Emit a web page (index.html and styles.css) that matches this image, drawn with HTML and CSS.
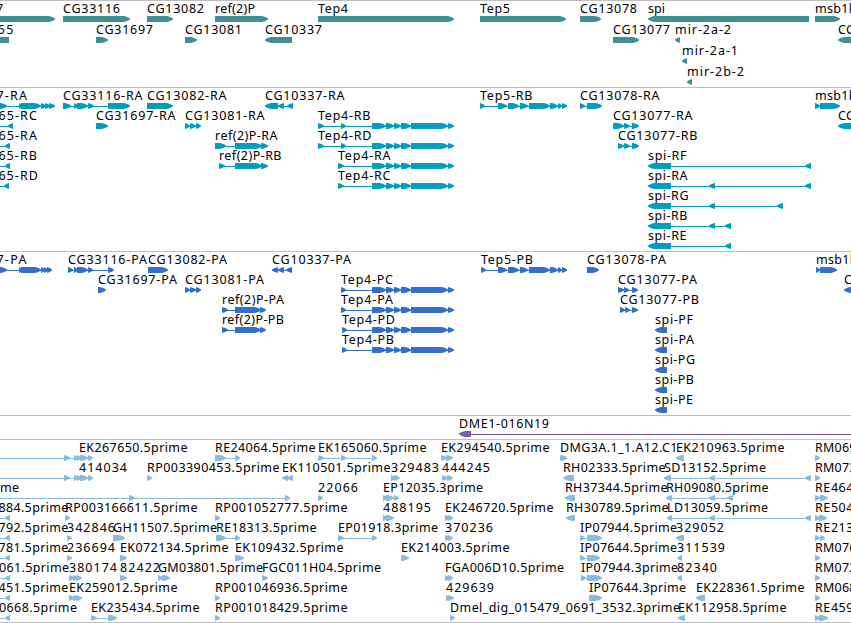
FILE: index.html
```html
<!DOCTYPE html>
<html lang="en">
<head>
<meta charset="utf-8">
<title>Genome browser</title>
<link rel="stylesheet" href="styles.css">
</head>
<body>
<main class="browser" id="browser"></main>
<script src="tracks.js"></script>
</body>
</html>
```

FILE: styles.css
```css
body {
  margin: 0;
  background: #fff;
}

.browser {
  display: flex;
  flex-direction: column;
  width: 851px;
  height: 623px;
  overflow: hidden;
}

.track {
  box-sizing: border-box;
  flex: none;
  overflow: hidden;
  border-top: 1px solid #bfbfbf;
}

.track svg {
  display: block;
}

.track:last-child {
  border-bottom: 1px solid #bfbfbf;
}

.label {
  font-family: "Noto Sans", "DejaVu Sans", sans-serif;
  font-size: 12.5px;
  fill: #000;
}

.shape {
  fill: currentColor;
}

.genes { color: #3f8f94; }
.transcripts { color: #009dbf; }
.proteins { color: #326ecd; }
.clones { color: #7a5ca8; }
.ests { color: #88bcde; }
```

FILE: tracks.js
```js
// Each feature: row | label x | label | strand | backbone (from-to) | exons (from-to,...)
const tep4 = "372-386,386-394,394-401,401-411,411-448,448-454";
const tep5 = "498-507,508-519,520-528,529-550,550-558,558-562,562-567";
const tracks = [
  { name: "genes", height: 87, pitch: 21, features: `
0|-4|7|+||-10-55
0|63|CG33116|+||63-130
0|147|CG13082|+||147-173
0|215|ref(2)P|+||215-268
0|318|Tep4|+||318-454
0|480|Tep5|+||480-566
0|580|CG13078|+||580-601
0|648|spi|-||648-809
0|815|msb1l|+||815-840
1|-2.6|65|-||-10-9
1|96|CG31697|+||96-108
1|185|CG13081|+||185-197
1|265|CG10337|-||265-292
1|613|CG13077|+||613-639
1|675|mir-2a-2|-||675-680
1|838|CG|-||838-860
2|682|mir-2a-1|-||682-687
3|687|mir-2b-2|-||687-692` },
  { name: "transcripts", height: 164, pitch: 20, features: `
0|-3.6|7-RA|+|0-50|-3-7,19-22,21-41,41-46,45-50,49-55
0|63|CG33116-RA|+|63-110|63-71,74-78,77-88,88-94,108-130
0|147|CG13082-RA|+||147-173
0|265|CG10337-RA|-|265-293|265-278,278-284,287-293
0|480|Tep5-RB|+|480-567|480-485,${tep5}
0|580|CG13078-RA|+|580-590|580-585,587-602
0|815|msb1l|+|815-830|815-820,820-840
1|-1.6|65-RC|-|0-13|8-13
1|96|CG31697-RA|+||96-108
1|185|CG13081-RA|+|185-200|185-190,190-196,196-201
1|318|Tep4-RB|+|318-450|318-324,341-346,${tep4}
1|613|CG13077-RA|+|613-635|613-624,624-630,632-639
1|838|CG|-||838-860
2|-1.6|65-RA|-|0-10|5-10
2|215|ref(2)P-RA|+|215-265|215-226,235-262,261-268
2|318|Tep4-RD|+|318-450|318-324,341-346,${tep4}
2|618|CG13077-RB|+|618-635|618-624,624-630,632-639
3|-1.6|65-RB|-|0-10|5-10
3|219|ref(2)P-RB|+|219-265|219-225,235-262,261-268
3|338|Tep4-RA|+|338-450|338-344,${tep4}
3|648|spi-RF|-|660-810|648-671,805-811
4|-1.6|65-RD|-|0-9|4-9
4|338|Tep4-RC|+|338-450|338-344,${tep4}
4|648|spi-RA|-|660-810|648-671,709-715,805-811
5|648|spi-RG|-|660-782|648-671,709-715,777-783
6|648|spi-RB|-|660-730|648-671,709-715,725-731
7|648|spi-RE|-|660-730|648-671,725-731` },
  { name: "proteins", height: 164, pitch: 20, features: `
0|-3.6|7-PA|+|0-50|-3-7,19-22,21-41,41-45,44-48,47-52
0|68|CG33116-PA|+|68-110|68-73,74-78,77-88,88-93,108-114
0|148|CG13082-PA|+||148-168
0|272|CG10337-PA|-|272-292|272-278,278-284,286-292
0|481|Tep5-PB|+|481-567|481-486,${tep5}
0|587|CG13078-PA|+||587-599
0|816|msb1l|+|816-825|816-820,820-837
1|98|CG31697-PA|+||98-106
1|185|CG13081-PA|+|185-200|185-190,190-196,196-201
1|341|Tep4-PC|+|341-450|341-346,${tep4}
1|618|CG13077-PA|+|618-635|618-624,624-629,632-638
1|844|CG|-||844-860
2|222|ref(2)P-PA|+|222-265|222-228,235-261,260-266
2|341|Tep4-PA|+|341-450|341-346,${tep4}
2|620|CG13077-PB|+|620-635|620-625,625-630,632-638
3|222|ref(2)P-PB|+|222-265|222-228,235-261,260-266
3|342|Tep4-PD|+|342-450|342-347,${tep4}
3|655|spi-PF|-||655-667
4|342|Tep4-PB|+|342-450|342-347,${tep4}
4|655|spi-PA|-||655-667
5|655|spi-PG|-||655-667
6|655|spi-PB|-||655-667
7|655|spi-PE|-||655-667` },
  { name: "clones", height: 24, pitch: 20, features: `
0|459|DME1-016N19|-|460-851|459-471` },
  { name: "ests", height: 184, pitch: 20, features: `
0|79|EK267650.5prime|+|0-90|64-70,74-78,77-81,80-88,88-93
0|215|RE24064.5prime|+|215-238|215-226,235-240
0|318|EK165060.5prime|+|318-375|318-324,341-346,372-377
0|441|EK294540.5prime|+|441-450|441-447,446-453
0|560|DMG3A.1_1.A12.C1|+||560-565,562-567
0|676|EK210963.5prime|-||676-684
0|815|RM069|+||815-820
1|79|414034|+|0-90|64-70,74-78,77-81,80-88,88-93
1|147|RP003390453.5prime|+||147-152
1|282|EK110501.5prime|-||282-288,287-293
1|391|329483|+||391-396,394-400
1|442|444245|+|442-450|442-448,447-453
1|563|RH02333.5prime|-||563-574
1|664|SD13152.5prime|-|666-810|664-671,709-715,805-811
1|815|RM073|+||815-820
2|0|me|+|0-288|129-135,285-290
2|318|22066|+||318-323
2|383|EP12035.3prime|+|383-398|383-388,386-394,394-399
2|565|RH37344.5prime|-||565-575
2|666|RH09080.5prime|-|668-730|666-672,709-715,727-733
2|815|RE464|+||815-820,820-828
3|-1.6|884.5prime|-|0-10|5-10
3|65|RP003166611.5prime|+||65-70
3|215|RP001052777.5prime|+||215-220
3|383|488195|+||383-388,386-394
3|445|EK246720.5prime|+||445-450,448-453
3|566|RH30789.5prime|-||566-575
3|667|LD13059.5prime|-|668-810|667-672,709-715,805-811
3|815|RE504|+||815-820,819-827
4|-1.6|792.5prime|-|0-10|5-10
4|67|342846|+||67-72
4|113|GH11507.5prime|+||113-125
4|216|RE18313.5prime|+|216-238|216-226,235-240
4|338|EP01918.3prime|+|338-375|338-344,372-377
4|445|370236|+||445-450,448-453
4|580|IP07944.5prime|+|580-590|580-585,587-602
4|676|329052|-||676-684
4|815|RE213|+||815-820,820-825
5|-1.6|781.5prime|-|0-10|5-10
5|67|236694|+||67-72
5|120|EK072134.5prime|+||120-127
5|235|EK109432.5prime|+||235-244
5|401|EK214003.5prime|+||401-409
5|580|IP07644.5prime|+|580-590|580-585,587-600
5|677|311539|-||677-682
5|815|RM076|+||815-820
6|-1|061.5prime|-|0-10|5-10
6|69|380174|+||69-74,73-78,76-82
6|120|82422|+||120-127
6|158|GM03801.5prime|+||158-163,162-170
6|262|FGC011H04.5prime|+||262-268
6|445|FGA006D10.5prime|+||445-450,448-453
6|581|IP07944.3prime|+|581-590|581-586,587-602
6|677|82340|-||677-682
6|815|RM072|+||815-820
7|-1.6|451.5prime|-|0-10|5-10
7|69|EK259012.5prime|+||69-74,73-78,76-82
7|215|RP001046936.5prime|+||215-220
7|446|429639|+||446-451,448-454
7|589|IP07644.3prime|+||589-602
7|696|EK228361.5prime|-||696-705
7|815|RM068|+||815-820
8|-1|0668.5prime|-|0-10|5-10
8|91|EK235434.5prime|+|91-110|91-97,108-117
8|215|RP001018429.5prime|+||215-220
8|450|Dmel_dig_015479_0691_3532.3prime|+||450-455
8|678|EK112958.5prime|-||678-685
8|815|RE459|+||815-820,819-828` }
];

const advance = { A: 8, B: 8, C: 8, D: 9, E: 7, F: 7, G: 9, H: 9, I: 4, K: 7.5, L: 6, M: 10, N: 9, P: 7, R: 7.5, S: 7, T: 7,
  a: 7, b: 8, d: 8, e: 7, f: 4, g: 8, i: 3, l: 3, m: 12, p: 8, r: 4, s: 6, "-": 7, ".": 4, _: 5.5, "(": 5, ")": 5 };
const labelWidth = s => [...s].reduce((w, c) => w + (advance[c] || 8), 0);

const range = s => s.match(/^(-?\d+)-(\d+)$/).slice(1).map(Number);

// A block with a pointed end; the point bulges a little halfway along.
function exonPath([a, b], strand, y) {
  const head = Math.min(6, b - a);
  const dir = strand === "+" ? 1 : -1;
  const [tail, tip] = strand === "+" ? [a, b] : [b, a];
  const neck = tip - dir * head;
  const mid = tip - dir * head * 0.45;
  return `<path d="M${tail} ${y}H${neck}L${mid} ${y + 1.1}L${tip} ${y + 2.4}V${y + 3.6}L${mid} ${y + 4.9}L${neck} ${y + 6}H${tail}Z"/>`;
}

document.getElementById("browser").innerHTML = tracks.map(t => {
  const body = t.features.trim().split("\n").map(line => {
    const [row, x, label, strand, backbone, exons] = line.split("|");
    const top = row * t.pitch;
    const y = top + 15;
    let shapes = exons.split(",").map(e => exonPath(range(e), strand, y)).join("");
    if (backbone) {
      const [a, b] = range(backbone);
      shapes += `<rect x="${a}" y="${y + 3}" width="${b - a}" height="1"/>`;
    }
    return `<g class="shape">${shapes}</g><text class="label" x="${x}" y="${top + 12}" textLength="${labelWidth(label)}">${label}</text>`;
  }).join("");
  return `<section class="track ${t.name}" style="height:${t.height}px"><svg width="851" height="${t.height - 1}">${body}</svg></section>`;
}).join("");
```
